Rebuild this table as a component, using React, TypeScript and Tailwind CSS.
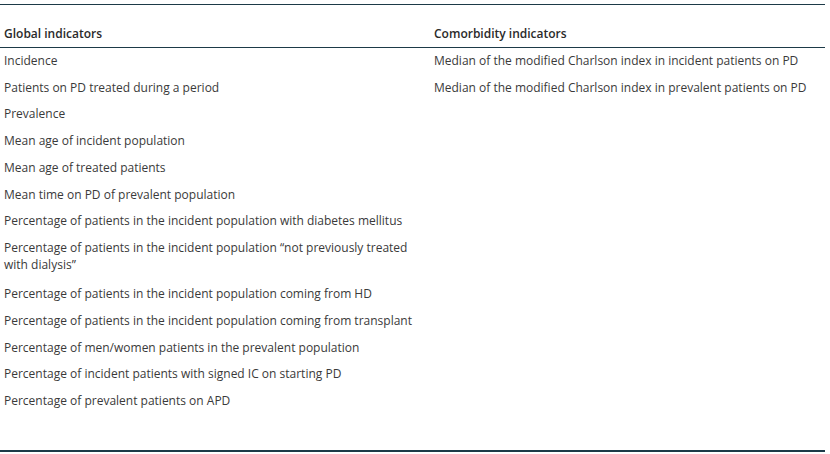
import React from 'react';

const globalRows = [
  'Incidence',
  'Patients on PD treated during a period',
  'Prevalence',
  'Mean age of incident population',
  'Mean age of treated patients',
  'Mean time on PD of prevalent population',
  'Percentage of patients in the incident population with diabetes mellitus',
  'Percentage of patients in the incident population \u201Cnot previously treated with dialysis\u201D',
  'Percentage of patients in the incident population coming from HD',
  'Percentage of patients in the incident population coming from transplant',
  'Percentage of men/women patients in the prevalent population',
  'Percentage of incident patients with signed IC on starting PD',
  'Percentage of prevalent patients on APD',
];

const comorbidityRows = [
  'Median of the modified Charlson index in incident patients on PD',
  'Median of the modified Charlson index in prevalent patients on PD',
];

const App: React.FC = () => {
  return (
    <div className="w-[830px] h-[454px] bg-white pt-[4px] text-[12px] text-[#3a3a3a] font-['Open_Sans',sans-serif]">
      <div className="w-[825px] border-t border-b-2 border-[#1d3a48] pb-[35px]">
        {/* header */}
        <div className="grid grid-cols-[430px_1fr] border-b border-[#1d3a48] pt-[20px] pb-[4px] font-semibold text-[#2a2a2a]">
          <div className="pl-[4px]">Global indicators</div>
          <div className="pl-[4px]">Comorbidity indicators</div>
        </div>

        <div className="grid grid-cols-[430px_1fr]">
          <div>
            {globalRows.map((row, i) => (
              <div
                key={row}
                className={i === 7 ? 'pl-[4px] pr-[8px] pt-[5px] pb-[8px] leading-[16.7px]' : 'pl-[4px] pr-[8px] py-[5px] leading-[16.7px]'}
              >
                {row}
              </div>
            ))}
          </div>
          <div>
            {comorbidityRows.map((row) => (
              <div key={row} className="pl-[4px] py-[5px] leading-[16.7px]">
                {row}
              </div>
            ))}
          </div>
        </div>
      </div>
    </div>
  );
};

export default App;
